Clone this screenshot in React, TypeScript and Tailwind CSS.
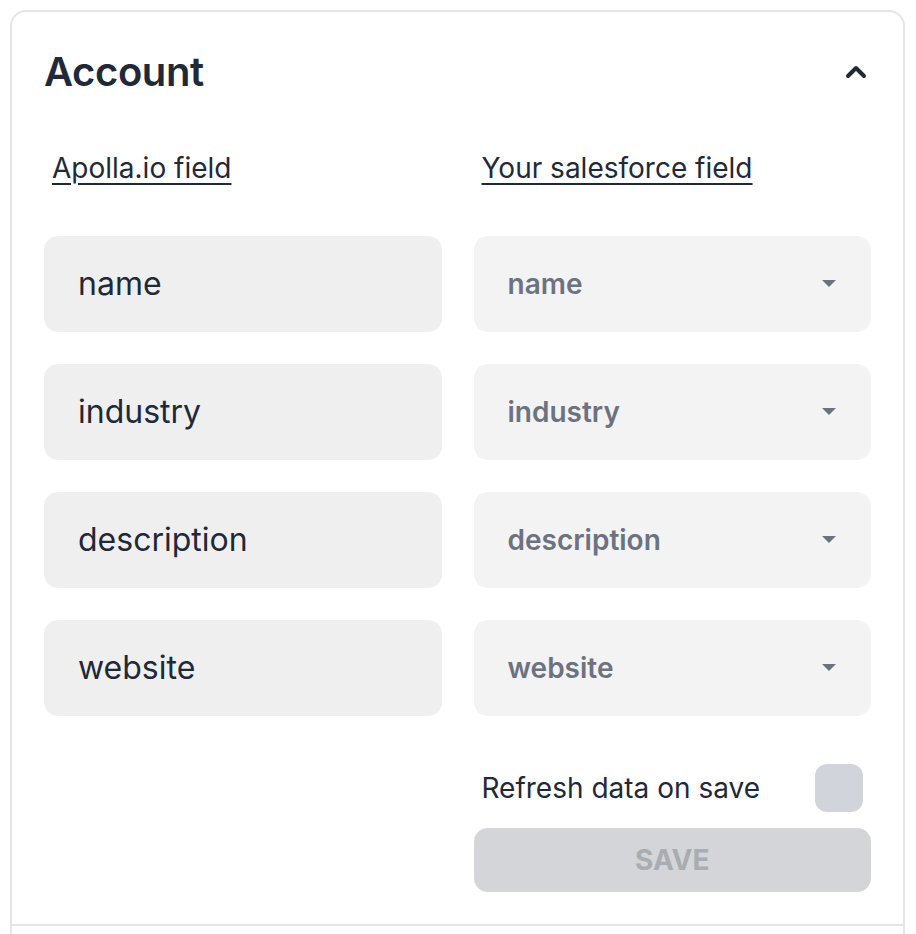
import { ChevronUp } from "lucide-react";

const fields = ["name", "industry", "description", "website"];

function Caret() {
  return (
    <svg width="16" height="8" viewBox="0 0 16 8" className="shrink-0">
      <path d="M1 0h14L8 7z" fill="#6b7280" />
    </svg>
  );
}

export default function App() {
  return (
    <div className="bg-white pl-[10px] pt-[10px] font-['Inter',sans-serif] text-[#1f2937]">
      <div className="w-[895px] rounded-t-[16px] border-2 border-b-0 border-[#e5e5e5]">
        <section className="border-b-2 border-[#e5e5e5] px-8 pb-[32px] pt-[34px]">
          <div className="flex items-center justify-between">
            <h2 className="text-[40px] font-semibold leading-[52px] tracking-[-0.01em]">Account</h2>
            <ChevronUp className="-mr-[1px] h-8 w-8 text-[#1f2937]" strokeWidth={3} />
          </div>

          <div className="mt-[50px] grid grid-cols-2 gap-x-8">
            <span className="pl-2 text-[28px] leading-[40px] underline underline-offset-[5px] decoration-[2px]">
              Apolla.io field
            </span>
            <span className="pl-2 text-[28px] leading-[40px] underline underline-offset-[5px] decoration-[2px]">
              Your salesforce field
            </span>
          </div>

          <div className="mt-[48px] grid grid-cols-2 gap-x-8 gap-y-8">
            {fields.map((f) => (
              <div key={f} className="contents">
                <div className="flex h-[96px] items-center rounded-[14px] bg-[#efefef] px-[34px] text-[32px]">
                  {f}
                </div>
                <div className="flex h-[96px] items-center justify-between rounded-[14px] bg-[#f3f3f4] pl-[34px] pr-[34px] text-[28px] font-semibold text-[#6b7280]">
                  <span>{f}</span>
                  <Caret />
                </div>
              </div>
            ))}
          </div>

          <div className="mt-[48px] grid grid-cols-2 gap-x-8">
            <div />
            <div>
              <div className="flex items-center justify-between pl-2 pr-2">
                <span className="text-[28px]">Refresh data on save</span>
                <span className="h-[48px] w-[48px] rounded-[12px] bg-[#d1d5db]" />
              </div>
              <button className="mt-[16px] flex h-[64px] w-full items-center justify-center rounded-[14px] bg-[#d4d5d8] text-[28px] font-bold text-[#a9acb1]">
                SAVE
              </button>
            </div>
          </div>
        </section>
        <div className="h-[8px]" />
      </div>
    </div>
  );
}
